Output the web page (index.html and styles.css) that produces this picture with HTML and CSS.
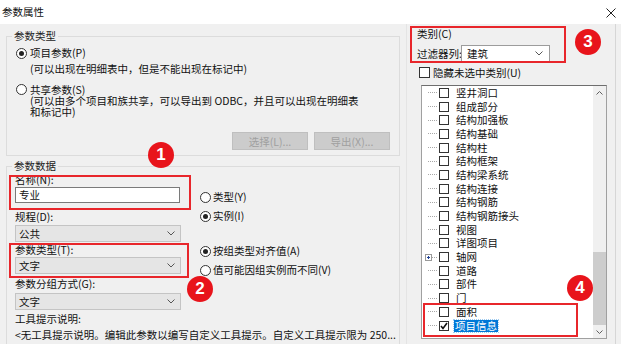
FILE: index.html
```html
<!DOCTYPE html>
<html lang="zh-CN">
<head>
    <meta charset="UTF-8">
    <meta name="viewport" content="width=device-width, initial-scale=1.0">
    <title>参数属性</title>
    <link rel="stylesheet" href="styles.css">
</head>
<body>
    <div class="dialog">
        <div class="titlebar">
            <span class="title">参数属性</span>
            <svg class="close" width="10" height="10" viewBox="0 0 10 10"><path d="M0.5 0.5L9.5 9.5M9.5 0.5L0.5 9.5" stroke="#222" stroke-width="1"/></svg>
        </div>

        <div class="main">
            <div class="left">
                <fieldset class="group group-type">
                    <legend>参数类型</legend>
                    <div class="radio-row row-project"><span class="radio checked"></span>项目参数(P)</div>
                    <div class="hint">(可以出现在明细表中，但是不能出现在标记中)</div>
                    <div class="radio-row row-shared"><span class="radio"></span>共享参数(S)</div>
                    <div class="hint hint-wrap">(可以由多个项目和族共享，可以导出到 ODBC，并且可以出现在明细表<br>和标记中)</div>
                    <div class="button-row">
                        <button class="btn" disabled>选择(L)...</button>
                        <button class="btn" disabled>导出(X)...</button>
                    </div>
                </fieldset>

                <fieldset class="group group-data">
                    <legend>参数数据</legend>
                    <div class="data-grid">
                        <div class="data-left">
                            <div class="label label-name">名称(N):</div>
                            <div class="textbox">专业</div>
                            <div class="label label-discipline">规程(D):</div>
                            <div class="combo combo-discipline">公共<svg class="chevron" width="8" height="5" viewBox="0 0 8 5"><path d="M0.5 0.5L4 4L7.5 0.5" fill="none" stroke="#555" stroke-width="1"/></svg></div>
                            <div class="label label-type">参数类型(T):</div>
                            <div class="combo combo-type">文字<svg class="chevron" width="8" height="5" viewBox="0 0 8 5"><path d="M0.5 0.5L4 4L7.5 0.5" fill="none" stroke="#555" stroke-width="1"/></svg></div>
                            <div class="label label-group">参数分组方式(G):</div>
                            <div class="combo combo-group">文字<svg class="chevron" width="8" height="5" viewBox="0 0 8 5"><path d="M0.5 0.5L4 4L7.5 0.5" fill="none" stroke="#555" stroke-width="1"/></svg></div>
                        </div>
                        <div class="data-right">
                            <div class="radio-row opt-type"><span class="radio"></span>类型(Y)</div>
                            <div class="radio-row opt-instance"><span class="radio checked"></span>实例(I)</div>
                            <div class="radio-row opt-align"><span class="radio checked"></span>按组类型对齐值(A)</div>
                            <div class="radio-row opt-vary"><span class="radio"></span>值可能因组实例而不同(V)</div>
                        </div>
                    </div>
                    <div class="label tip-label">工具提示说明:</div>
                    <div class="tip-text">&lt;无工具提示说明。编辑此参数以编写自定义工具提示。自定义工具提示限为 250...</div>
                </fieldset>
            </div>

            <div class="right">
                <div class="category-title">类别(C)</div>
                <div class="filter-row">
                    <span class="filter-label">过滤器列:</span>
                    <div class="filter-select">建筑<svg class="chevron" width="8" height="5" viewBox="0 0 8 5"><path d="M0.5 0.5L4 4L7.5 0.5" fill="none" stroke="#555" stroke-width="1"/></svg></div>
                </div>
                <div class="check-row"><span class="check"></span>隐藏未选中类别(U)</div>

                <div class="listbox">
                    <div class="tree">
                        <div class="node"><span class="branch"></span><span class="check"></span><span class="node-text">竖井洞口</span></div>
                        <div class="node"><span class="branch"></span><span class="check"></span><span class="node-text">组成部分</span></div>
                        <div class="node"><span class="branch"></span><span class="check"></span><span class="node-text">结构加强板</span></div>
                        <div class="node"><span class="branch"></span><span class="check"></span><span class="node-text">结构基础</span></div>
                        <div class="node"><span class="branch"></span><span class="check"></span><span class="node-text">结构柱</span></div>
                        <div class="node"><span class="branch"></span><span class="check"></span><span class="node-text">结构框架</span></div>
                        <div class="node"><span class="branch"></span><span class="check"></span><span class="node-text">结构梁系统</span></div>
                        <div class="node"><span class="branch"></span><span class="check"></span><span class="node-text">结构连接</span></div>
                        <div class="node"><span class="branch"></span><span class="check"></span><span class="node-text">结构钢筋</span></div>
                        <div class="node"><span class="branch"></span><span class="check"></span><span class="node-text">结构钢筋接头</span></div>
                        <div class="node"><span class="branch"></span><span class="check"></span><span class="node-text">视图</span></div>
                        <div class="node"><span class="branch"></span><span class="check"></span><span class="node-text">详图项目</span></div>
                        <div class="node has-children">
                            <svg class="expander" width="7" height="7" viewBox="0 0 7 7"><rect x="0.5" y="0.5" width="6" height="6" fill="#fff" stroke="#9a9a9a"/><path d="M2 3.5H5M3.5 2V5" stroke="#1c3f94" stroke-width="1"/></svg>
                            <span class="branch"></span><span class="check"></span><span class="node-text">轴网</span>
                        </div>
                        <div class="node"><span class="branch"></span><span class="check"></span><span class="node-text">道路</span></div>
                        <div class="node"><span class="branch"></span><span class="check"></span><span class="node-text">部件</span></div>
                        <div class="node"><span class="branch"></span><span class="check"></span><span class="node-text">门</span></div>
                        <div class="node"><span class="branch"></span><span class="check"></span><span class="node-text">面积</span></div>
                        <div class="node">
                            <span class="branch"></span>
                            <span class="check checked"><svg width="8" height="8" viewBox="0 0 8 8"><path d="M1 4L3 6.5L7 1" fill="none" stroke="#111" stroke-width="1.6"/></svg></span>
                            <span class="node-text selected">项目信息</span>
                        </div>
                    </div>
                    <div class="scrollbar">
                        <div class="sb-btn"><svg width="7" height="4" viewBox="0 0 7 4"><path d="M0.5 3.5L3.5 0.5L6.5 3.5" fill="none" stroke="#606060" stroke-width="1"/></svg></div>
                        <div class="sb-track"><div class="sb-thumb"></div></div>
                        <div class="sb-btn sb-down"><svg width="7" height="4" viewBox="0 0 7 4"><path d="M0.5 0.5L3.5 3.5L6.5 0.5" fill="none" stroke="#606060" stroke-width="1"/></svg></div>
                    </div>
                </div>
            </div>
        </div>

        <!-- annotations -->
        <div class="mark mark-1"></div>
        <div class="mark mark-2"></div>
        <div class="mark mark-3"></div>
        <div class="mark mark-4"></div>
        <div class="badge badge-1">1</div>
        <div class="badge badge-2">2</div>
        <div class="badge badge-3">3</div>
        <div class="badge badge-4">4</div>
    </div>
</body>
</html>
```

FILE: styles.css
```css
* {
    box-sizing: border-box;
}

body {
    margin: 0;
    font-family: "Noto Sans CJK SC", "Noto Sans", sans-serif;
    font-size: 10.5px;
    color: #111;
    background: #f0f0f0;
}

.dialog {
    position: relative;
    width: 621px;
    height: 344px;
    overflow: hidden;
}

.titlebar {
    height: 24px;
    background: #fff;
    display: flex;
    align-items: center;
    justify-content: space-between;
    padding: 0 5px 0 2px;
    line-height: 12px;
}

.close {
    margin-top: 1px;
}

.main {
    display: flex;
    height: 320px;
    background: #f0f0f0;
    overflow: hidden;
}

.left {
    width: 406px;
    padding-left: 6px;
}

/* group boxes */
.group {
    margin: 0;
    padding: 0;
    min-width: 0;
    width: 394px;
    border: 1px solid #dcdcdc;
}

.group legend {
    padding: 0 2px;
    margin-left: 5px;
    line-height: 12px;
    color: #222;
}

.group-type {
    margin-top: 6px;
    padding-bottom: 5px;
}

.group-data {
    margin-top: 4px;
    height: 200px;
}

.radio-row {
    display: flex;
    align-items: center;
    height: 14px;
    line-height: 14px;
    white-space: nowrap;
}

.radio {
    width: 11px;
    height: 11px;
    border: 1px solid #333;
    border-radius: 50%;
    background: #fff;
    margin-right: 3px;
    flex-shrink: 0;
    display: flex;
    align-items: center;
    justify-content: center;
}

.radio.checked::after {
    content: '';
    width: 5px;
    height: 5px;
    border-radius: 50%;
    background: #222;
}

.row-project {
    margin-top: 4px;
    padding-left: 9px;
}

.hint {
    margin-top: 2px;
    padding-left: 23px;
    line-height: 14px;
    white-space: nowrap;
}

.row-shared {
    margin-top: 8px;
    padding-left: 9px;
    height: 11px;
    line-height: 11px;
}

.hint-wrap {
    margin-top: 0;
    line-height: 11px;
}

.button-row {
    display: flex;
    justify-content: flex-end;
    gap: 6px;
    margin-top: 15px;
    padding-right: 9px;
}

.btn {
    width: 76px;
    height: 18px;
    padding: 0;
    font-family: inherit;
    font-size: 10.5px;
    color: #a0a0a0;
    background: #cccccc;
    border: 1px solid #bfbfbf;
}

/* parameter data */
.data-grid {
    display: flex;
}

.data-left {
    width: 166px;
    margin-left: 8px;
}

.label {
    height: 12px;
    line-height: 12px;
    white-space: nowrap;
}

.label-name { margin-top: 2px; }
.label-discipline { margin-top: 8px; }
.label-type { margin-top: 2px; }
.label-group { margin-top: 4px; }

.textbox {
    margin-top: 1px;
    width: 165px;
    height: 16px;
    line-height: 14px;
    padding-left: 3px;
    background: #fff;
    border: 1px solid #7a7a7a;
}

.combo {
    display: flex;
    align-items: center;
    justify-content: space-between;
    width: 166px;
    height: 17px;
    padding: 0 5px 0 3px;
    background: #e5e5e5;
    border: 1px solid #c4c4c4;
}

.combo-discipline { margin-top: 2px; }
.combo-type { margin-top: 1px; }
.combo-group { margin-top: 3px; }

.data-right {
    margin-left: 19px;
}

.data-right .radio {
    margin-right: 2px;
}

.opt-type { margin-top: 18px; }
.opt-instance { margin-top: 5px; }
.opt-align { margin-top: 21px; }
.opt-vary { margin-top: 5px; }

.tip-label {
    margin: 3px 0 0 8px;
}

.tip-text {
    margin: 4px 0 0 8px;
    line-height: 12px;
    white-space: nowrap;
}

/* categories */
.right {
    width: 210px;
    border-left: 1px solid #e4e4e4;
    border-right: 1px solid #d6d6d6;
}

.category-title {
    margin-top: 4px;
    padding-left: 10px;
    line-height: 12px;
}

.filter-row {
    display: flex;
    align-items: center;
    margin-top: 5px;
    padding-left: 10px;
    height: 17px;
}

.filter-label {
    width: 44px;
    white-space: nowrap;
}

.filter-select {
    display: flex;
    align-items: center;
    justify-content: space-between;
    width: 89px;
    height: 17px;
    padding: 0 6px 0 5px;
    background: #fff;
    border: 1px solid #9c9c9c;
}

.check-row {
    display: flex;
    align-items: center;
    margin-top: 4px;
    padding-left: 12px;
    height: 12px;
    white-space: nowrap;
}

.check-row .check {
    width: 11px;
    height: 11px;
    margin-right: 3px;
}

.check {
    display: flex;
    align-items: center;
    justify-content: center;
    width: 10px;
    height: 10px;
    background: #fff;
    border: 1px solid #333;
    flex-shrink: 0;
}

.listbox {
    display: flex;
    margin: 7px 0 0 14px;
    width: 186px;
    height: 254px;
    background: #fff;
    border: 1px solid #a0a0a0;
    border-top-color: #6e6e6e;
}

.tree {
    flex: 1;
    overflow: hidden;
}

.node {
    display: flex;
    align-items: center;
    height: 13.7px;
    padding-left: 6px;
    white-space: nowrap;
}

.branch {
    width: 9px;
    margin-right: 2px;
    border-top: 1px dotted #a8a8a8;
}

.has-children {
    padding-left: 3px;
}

.has-children .branch {
    width: 5px;
}

.node-text {
    margin-left: 6px;
    line-height: 12px;
    padding: 0 1px;
}

.node-text.selected {
    margin-left: 5px;
    background: #0078d7;
    color: #fff;
    outline: 1px dotted #9ecbf0;
}

.scrollbar {
    width: 13px;
    display: flex;
    flex-direction: column;
    background: #f0f0f0;
}

.sb-btn {
    height: 14px;
    display: flex;
    align-items: center;
    justify-content: center;
}

.sb-down {
    height: 13px;
}

.sb-track {
    flex: 1;
}

.sb-thumb {
    margin-top: 152px;
    height: 73px;
    background: #cdcdcd;
}

/* red annotation marks */
.mark {
    position: absolute;
    border: 2px solid #e8262b;
}

.mark-1 { left: 9px; top: 175px; width: 182px; height: 35px; }
.mark-2 { left: 9px; top: 243px; width: 180px; height: 35px; }
.mark-3 { left: 410px; top: 26px; width: 156px; height: 37px; }
.mark-4 { left: 423px; top: 303px; width: 155px; height: 34px; }

.badge {
    position: absolute;
    width: 26px;
    height: 26px;
    border-radius: 50%;
    background: #e8141b;
    color: #fff;
    font-family: "Liberation Sans", Arial, sans-serif;
    font-weight: bold;
    font-size: 17px;
    line-height: 26px;
    text-align: center;
}

.badge-1 { left: 148px; top: 142px; }
.badge-2 { left: 187px; top: 276px; }
.badge-3 { left: 575px; top: 29px; }
.badge-4 { left: 567px; top: 275px; }
```
